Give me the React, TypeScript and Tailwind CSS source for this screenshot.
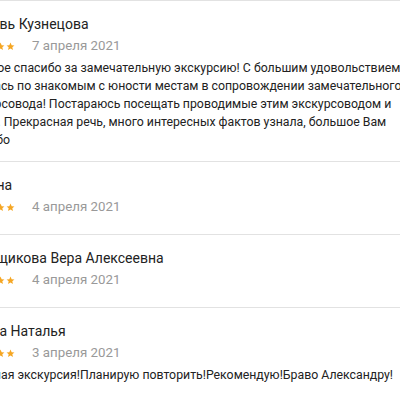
import React from "react"

type Review = {
  name: string
  date: string
  lines: string[]
}

const reviews: Review[] = [
  {
    name: "Любовь Кузнецова",
    date: "7 апреля 2021",
    lines: [
      "Простое спасибо за замечательную экскурсию! С большим удовольствием",
      "гулялась по знакомым с юности местам в сопровождении замечательного",
      "экскурсовода! Постараюсь посещать проводимые этим экскурсоводом и",
      "также. Прекрасная речь, много интересных фактов узнала, большое Вам",
      "спасибо",
    ],
  },
  { name: "Полина", date: "4 апреля 2021", lines: [] },
  { name: "Пильщикова Вера Алексеевна", date: "4 апреля 2021", lines: [] },
  {
    name: "Юдина Наталья",
    date: "3 апреля 2021",
    lines: ["Хорошая экскурсия!Планирую повторить!Рекомендую!Браво Александру!"],
  },
]

function Star() {
  return (
    <svg viewBox="0 0 24 24" className="w-[9px] h-[9px]" fill="#f5a623">
      <path d="M12 1.5l3.1 6.9 7.4.7-5.6 5 1.7 7.4L12 17.6l-6.6 3.9 1.7-7.4-5.6-5 7.4-.7z" />
    </svg>
  )
}

export default function App() {
  return (
    <div className="w-[400px] h-[400px] overflow-hidden bg-white font-['Roboto',sans-serif]">
      <div className="-ml-[37.5px] w-[460px]">
        {reviews.map((r) => (
          <div key={r.name} className="border-t border-[#e2e2e2] pt-[13px] pb-[16px]">
            <div className="text-[14px] leading-[20px] text-[#222] whitespace-nowrap">{r.name}</div>
            <div className="mt-[1px] h-[22px] flex items-center">
              <div className="flex gap-[1px] pl-[3px]">
                {[1, 2, 3, 4, 5].map((i) => (
                  <Star key={i} />
                ))}
              </div>
              <span className="ml-[17.5px] text-[13.3px] text-[#999]">{r.date}</span>
            </div>
            {r.lines.length > 0 && (
              <div className="mt-[2px] -mb-[4px] text-[12.3px] leading-[18px] text-[#222]">
                {r.lines.map((l) => (
                  <div key={l} className="whitespace-nowrap">
                    {l}
                  </div>
                ))}
              </div>
            )}
          </div>
        ))}
      </div>
    </div>
  )
}
